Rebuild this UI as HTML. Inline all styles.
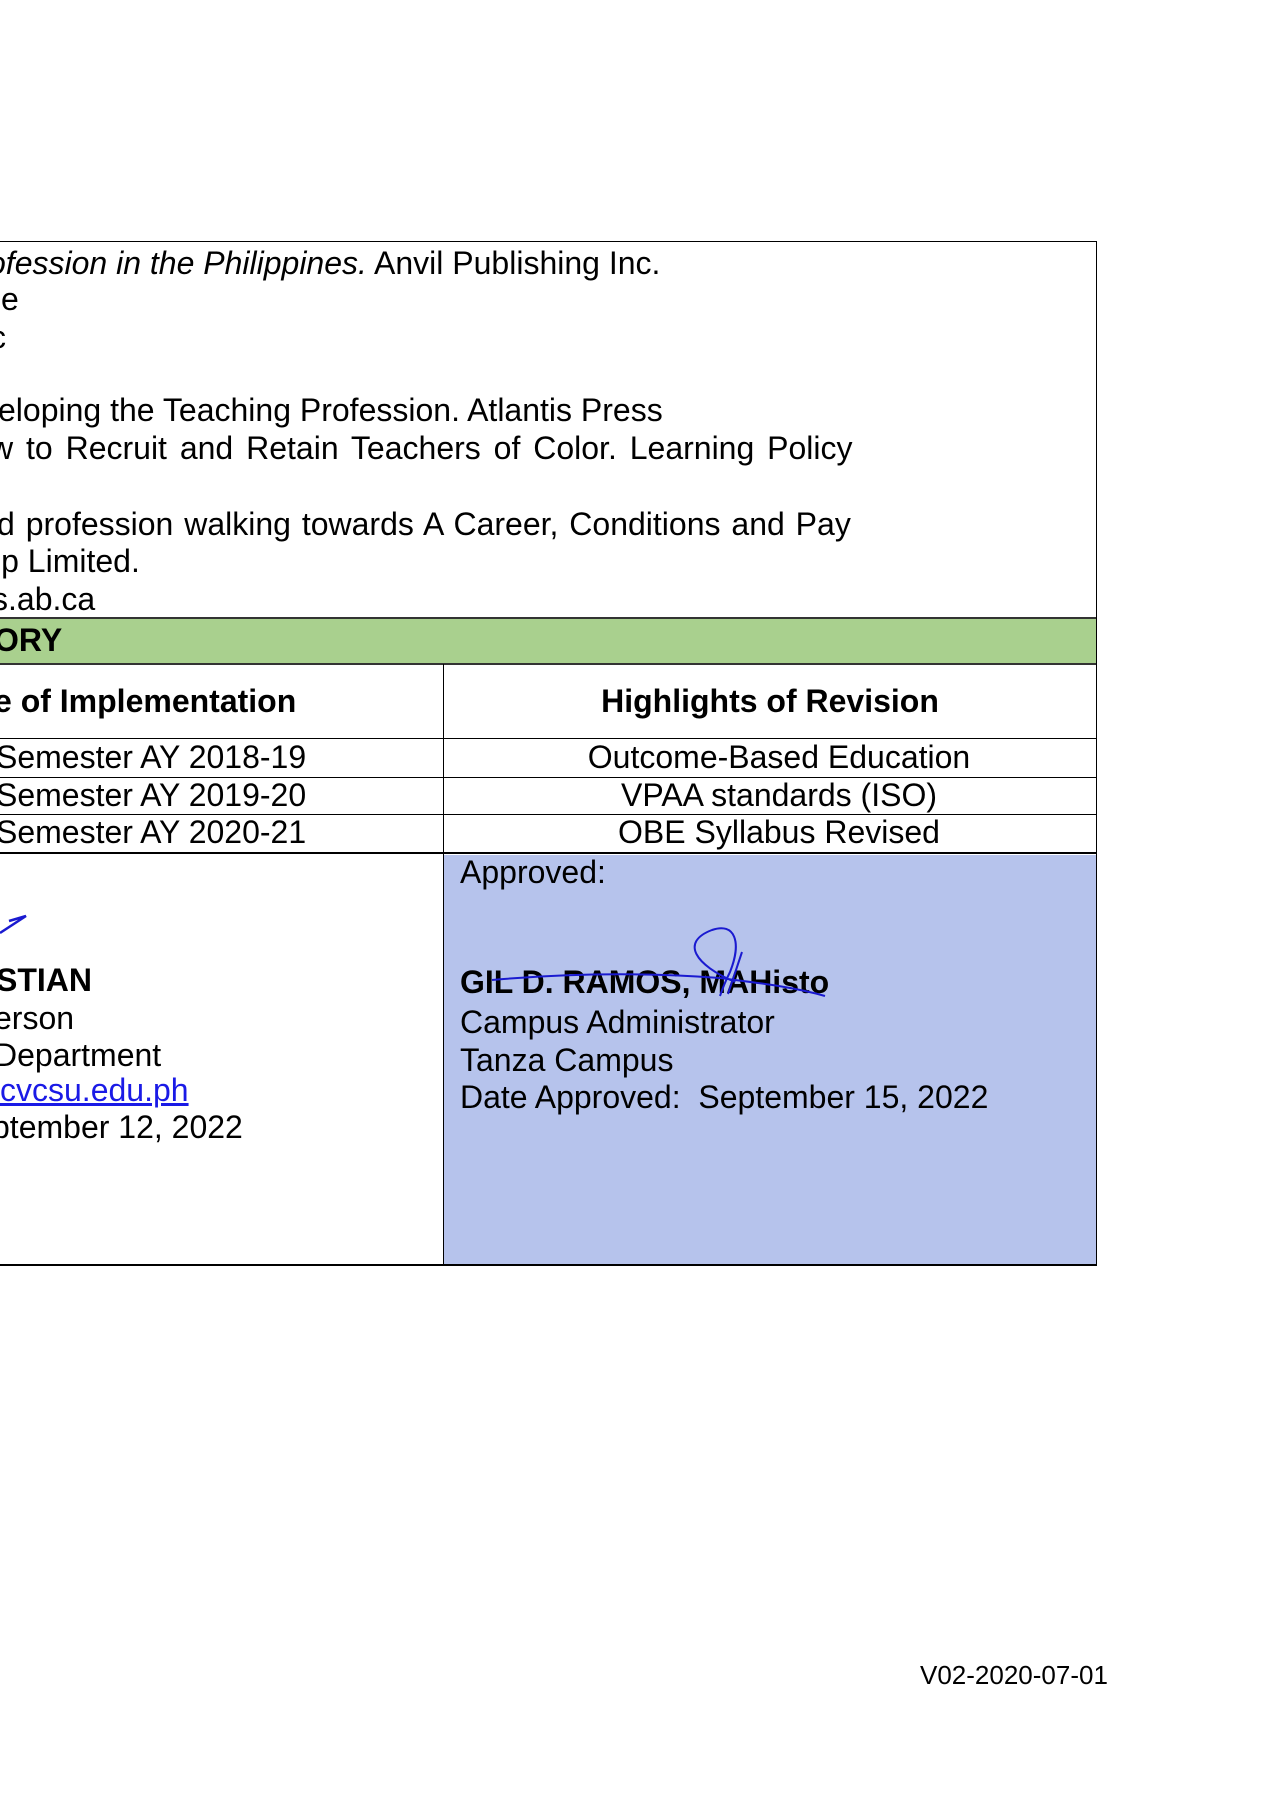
<!DOCTYPE html>
<html><head><meta charset="utf-8"><style>
html,body{margin:0;padding:0;background:#fff;}
body{width:1272px;height:1800px;position:relative;overflow:hidden;font-family:"Liberation Sans",Arial,sans-serif;color:#000;}
.t{position:absolute;font-size:32px;line-height:36px;white-space:nowrap;}
.b{font-weight:bold;}
.ln{position:absolute;background:#000;}
</style></head><body>
<div class="ln" style="left:0;top:241px;width:1097px;height:1px"></div>
<div class="ln" style="left:1096px;top:241px;width:1px;height:1024px"></div>
<div class="t" style="left:-12px;top:245px"><i>ofession in the Philippines.</i> Anvil Publishing Inc.</div>
<div class="t" style="left:-15px;top:281px">se</div>
<div class="t" style="left:-10px;top:319px">c</div>
<div class="t" style="left:-2px;top:392px">eloping the Teaching Profession. Atlantis Press</div>
<div class="t" style="left:-10px;top:430px;word-spacing:4px">w to Recruit and Retain Teachers of Color. Learning Policy</div>
<div class="t" style="left:-3px;top:506px;word-spacing:2px">d profession walking towards A Career, Conditions and Pay</div>
<div class="t" style="left:-6px;top:543px">ip Limited.</div>
<div class="t" style="left:-8px;top:581px">s.ab.ca</div>
<div style="position:absolute;left:0;top:617px;width:1096px;height:48px;background:#a9d08e;border-top:2px solid #333;border-bottom:2px solid #333;box-sizing:border-box"></div>
<div class="t b" style="left:-6px;top:622px">ORY</div>
<div class="ln" style="left:443px;top:664px;width:1px;height:600px"></div>
<div class="t b" style="left:-6px;top:683px">e of Implementation</div>
<div class="t b" style="left:444px;width:652px;text-align:center;top:683px">Highlights of Revision</div>
<div class="ln" style="left:0;top:738px;width:1096px;height:1px"></div>
<div class="ln" style="left:0;top:777px;width:1096px;height:1px"></div>
<div class="ln" style="left:0;top:814px;width:1096px;height:1px"></div>
<div class="ln" style="left:0;top:852px;width:1096px;height:2px"></div>
<div class="t" style="left:-4px;top:739px">Semester AY 2018-19</div>
<div class="t" style="left:-4px;top:777px">Semester AY 2019-20</div>
<div class="t" style="left:-4px;top:814px">Semester AY 2020-21</div>
<div class="t" style="left:444px;width:670px;text-align:center;top:739px">Outcome-Based Education</div>
<div class="t" style="left:444px;width:670px;text-align:center;top:777px">VPAA standards (ISO)</div>
<div class="t" style="left:444px;width:670px;text-align:center;top:814px">OBE Syllabus Revised</div>
<div style="position:absolute;left:444px;top:855px;width:652px;height:409px;background:#b6c3ec"></div>
<div class="ln" style="left:0;top:1264px;width:1097px;height:2px"></div>
<svg style="position:absolute;left:0;top:900px" width="40" height="50"><path d="M0 33 L26 16 L9 21" fill="none" stroke="#1a1ad0" stroke-width="2.5"/></svg>
<div class="t b" style="left:-4px;top:962px">STIAN</div>
<div class="t" style="left:-6px;top:1000px">erson</div>
<div class="t" style="left:-6px;top:1037px">Department</div>
<div class="t" style="left:0;top:1072px;color:#1a1ae6;text-decoration:underline">cvcsu.edu.ph</div>
<div class="t" style="left:-8px;top:1109px">ptember 12, 2022</div>
<div class="t" style="left:460px;top:854px">Approved:</div>
<div class="t b" style="left:460px;top:964px">GIL D. RAMOS, MAHisto</div>
<svg style="position:absolute;left:480px;top:920px" width="380" height="80"><path d="M12 60 C80 54 160 52 240 58 C270 62 310 66 345 76 M255 62 C215 45 200 22 232 10 C255 2 262 22 250 52 C245 62 242 70 240 76 M262 32 L248 74" fill="none" stroke="#1a1ad0" stroke-width="2"/></svg>
<div class="t" style="left:460px;top:1004px">Campus Administrator</div>
<div class="t" style="left:460px;top:1042px">Tanza Campus</div>
<div class="t" style="left:460px;top:1079px">Date Approved:&nbsp; September 15, 2022</div>
<div class="t" style="left:920px;top:1657px;font-size:26px">V02-2020-07-01</div>
</body></html>
